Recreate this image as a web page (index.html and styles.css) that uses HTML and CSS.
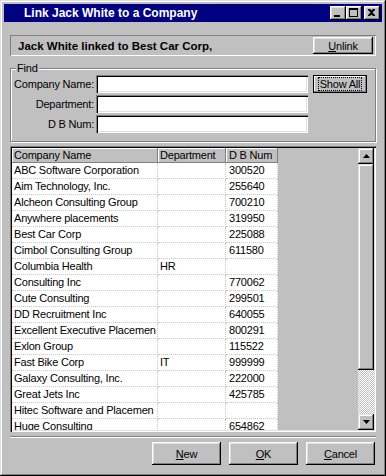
FILE: index.html
```html
<!DOCTYPE html>
<html lang="en">
<head>
    <meta charset="UTF-8">
    <title>Link Jack White to a Company</title>
    <link rel="stylesheet" href="styles.css">
</head>
<body>
    <div class="window">
        <div class="titlebar">
            <span class="title">Link Jack White to a Company</span>
            <div class="title-buttons">
                <button class="tbtn"><svg width="16" height="14" viewBox="0 0 16 14"><rect x="4" y="9" width="6" height="2" fill="#000"/></svg></button>
                <button class="tbtn"><svg width="16" height="14" viewBox="0 0 16 14"><path d="M3 2h9v9H3z M4 4v6h7V4z" fill="#000" fill-rule="evenodd"/></svg></button>
                <button class="tbtn tbtn-close"><svg width="16" height="14" viewBox="0 0 16 14"><path d="M4 3h2l1.5 1.5L9 3h2v1L8.5 6.5 11 9v1H9L7.5 8.5 6 10H4V9l2.5-2.5L4 4z" fill="#000"/></svg></button>
            </div>
        </div>

        <div class="content">
            <!-- текущая привязка -->
            <div class="status-panel">
                <span class="status-text">Jack White linked to Best Car Corp,</span>
                <button class="btn btn-unlink"><u>U</u>nlink</button>
            </div>

            <fieldset class="find">
                <legend>Find</legend>
                <div class="find-grid">
                    <label for="companyName">Company Name:</label>
                    <input type="text" id="companyName" class="field">
                    <button class="btn btn-default"><span class="focus">Show All</span></button>

                    <label for="department">Department:</label>
                    <input type="text" id="department" class="field">
                    <span></span>

                    <label for="dbNum">D B Num:</label>
                    <input type="text" id="dbNum" class="field">
                    <span></span>
                </div>
            </fieldset>

            <!-- список компаний -->
            <div class="list">
                <div class="list-body">
                    <table class="grid">
                        <thead>
                            <tr><th class="c-name">Company Name</th><th class="c-dept">Department</th><th class="c-num">D B Num</th></tr>
                        </thead>
                        <tbody>
                            <tr><td>ABC Software Corporation</td><td></td><td class="num">300520</td></tr>
                            <tr><td>Aim Technology, Inc.</td><td></td><td class="num">255640</td></tr>
                            <tr><td>Alcheon Consulting Group</td><td></td><td class="num">700210</td></tr>
                            <tr><td>Anywhere placements</td><td></td><td class="num">319950</td></tr>
                            <tr><td>Best Car Corp</td><td></td><td class="num">225088</td></tr>
                            <tr><td>Cimbol Consulting Group</td><td></td><td class="num">611580</td></tr>
                            <tr><td>Columbia Health</td><td>HR</td><td class="num"></td></tr>
                            <tr><td>Consulting Inc</td><td></td><td class="num">770062</td></tr>
                            <tr><td>Cute Consulting</td><td></td><td class="num">299501</td></tr>
                            <tr><td>DD Recruitment Inc</td><td></td><td class="num">640055</td></tr>
                            <tr><td>Excellent Executive Placemen</td><td></td><td class="num">800291</td></tr>
                            <tr><td>Exlon Group</td><td></td><td class="num">115522</td></tr>
                            <tr><td>Fast Bike Corp</td><td>IT</td><td class="num">999999</td></tr>
                            <tr><td>Galaxy Consulting, Inc.</td><td></td><td class="num">222000</td></tr>
                            <tr><td>Great Jets Inc</td><td></td><td class="num">425785</td></tr>
                            <tr><td>Hitec Software and Placemen</td><td></td><td class="num"></td></tr>
                            <tr><td>Huge Consulting</td><td></td><td class="num">654862</td></tr>
                        </tbody>
                    </table>
                </div>
                <div class="scrollbar">
                    <div class="sb-btn"><svg width="7" height="4" viewBox="0 0 7 4"><path d="M3.5 0L7 4H0z" fill="#000"/></svg></div>
                    <div class="sb-thumb"></div>
                    <div class="sb-track"></div>
                    <div class="sb-btn"><svg width="7" height="4" viewBox="0 0 7 4"><path d="M0 0h7L3.5 4z" fill="#000"/></svg></div>
                </div>
            </div>

            <div class="separator"></div>

            <div class="actions">
                <button class="btn btn-action"><u>N</u>ew</button>
                <button class="btn btn-action"><u>O</u>K</button>
                <button class="btn btn-action"><u>C</u>ancel</button>
            </div>
        </div>
    </div>
</body>
</html>
```

FILE: styles.css
```css
/* диалог в классическом стиле */
body {
    margin: 0;
    background: #c0c0c0;
}

.window {
    width: 386px;
    height: 476px;
    box-sizing: border-box;
    padding: 4px;
    background: #c0c0c0;
    box-shadow: inset -1px -1px #000, inset 1px 1px #dfdfdf, inset -2px -2px #808080, inset 2px 2px #fff;
    display: flex;
    flex-direction: column;
    font-family: "Liberation Sans", Arial, sans-serif;
    font-size: 11px;
    letter-spacing: -0.2px;
    color: #000;
}

.titlebar {
    height: 18px;
    background: #000080;
    color: #fff;
    display: flex;
    align-items: center;
    padding-left: 20px;
}

.title {
    flex: 1;
    font-weight: bold;
    font-size: 12px;
    letter-spacing: 0;
}

.title-buttons {
    display: flex;
    margin-right: 2px;
}

.tbtn {
    width: 16px;
    height: 14px;
    padding: 0;
    border: none;
    background: #c0c0c0;
    box-shadow: inset -1px -1px #000, inset 1px 1px #fff, inset -2px -2px #808080, inset 2px 2px #dfdfdf;
}

.tbtn svg {
    display: block;
}

.tbtn-close {
    margin-left: 2px;
}

.content {
    flex: 1;
    display: flex;
    flex-direction: column;
    padding: 13px 6px 0 6px;
}

.btn {
    background: #c0c0c0;
    border: none;
    padding: 0;
    color: #000;
    font-family: inherit;
    font-size: 11px;
    letter-spacing: inherit;
    box-shadow: inset -1px -1px #000, inset 1px 1px #fff, inset -2px -2px #808080, inset 2px 2px #dfdfdf;
}

.status-panel {
    height: 21px;
    box-sizing: border-box;
    display: flex;
    align-items: center;
    justify-content: space-between;
    padding: 0 3px 0 8px;
    box-shadow: inset 1px 1px #808080, inset -1px -1px #fff;
}

.status-text {
    font-weight: bold;
    font-size: 11.5px;
    letter-spacing: 0;
}

.btn-unlink {
    width: 60px;
    height: 17px;
}

/* блок поиска */
.find {
    margin: 6px 0 0 0;
    padding: 0 0 8px 0;
    min-inline-size: 0;
    border: 1px solid #808080;
    box-shadow: inset 1px 1px #fff, 1px 1px #fff;
}

.find legend {
    margin-left: 5px;
    padding: 0 1px;
    background: #c0c0c0;
    line-height: 13px;
}

.find-grid {
    display: grid;
    grid-template-columns: 83px 212px 54px;
    grid-auto-rows: 18px;
    column-gap: 2px;
    row-gap: 2px;
    align-items: center;
}

.find-grid label {
    text-align: right;
}

.field {
    width: 212px;
    height: 18px;
    box-sizing: border-box;
    margin: 0;
    padding: 0 3px;
    border: none;
    background: #fff;
    font-family: inherit;
    font-size: 11px;
    box-shadow: inset 1px 1px #808080, inset 2px 2px #000, inset -1px -1px #fff, inset -2px -2px #dfdfdf;
}

.btn-default {
    margin-left: 3px;
    width: 54px;
    height: 18px;
    box-sizing: border-box;
    border: 1px solid #000;
    box-shadow: inset -1px -1px #808080, inset 1px 1px #fff;
}

.btn-default .focus {
    outline: 1px dotted #000;
    outline-offset: 0;
    padding: 0 1px;
}

/* таблица */
.list {
    margin-top: 4px;
    height: 286px;
    box-sizing: border-box;
    padding: 2px;
    display: flex;
    box-shadow: inset 1px 1px #808080, inset 2px 2px #000, inset -1px -1px #fff, inset -2px -2px #dfdfdf;
}

.list-body {
    flex: 1;
    overflow: hidden;
    background: #c0c0c0;
}

.grid {
    table-layout: fixed;
    border-collapse: separate;
    border-spacing: 0;
    width: 266px;
}

.grid th,
.grid td {
    padding: 0 0 0 2px;
    white-space: nowrap;
    overflow: hidden;
    text-overflow: clip;
    text-align: left;
    font-weight: normal;
    box-sizing: border-box;
}

.grid th {
    line-height: 15px;
    background: #c0c0c0;
    box-shadow: inset -1px -1px #808080, inset 1px 1px #fff;
}

.grid td {
    line-height: 15px;
    background: #fff;
    border-right: 1px dotted #c8c8c8;
    border-bottom: 1px dotted #c8c8c8;
}

.c-name { width: 146px; }
.c-dept { width: 68px; }
.c-num { width: 52px; }

.grid th.c-num,
.grid td.num {
    padding-left: 3px;
}

.scrollbar {
    width: 16px;
    display: flex;
    flex-direction: column;
}

.sb-btn {
    height: 16px;
    display: flex;
    align-items: center;
    justify-content: center;
    background: #c0c0c0;
    box-shadow: inset -1px -1px #000, inset 1px 1px #dfdfdf, inset -2px -2px #808080, inset 2px 2px #fff;
}

.sb-btn svg {
    display: block;
}

.sb-thumb {
    height: 206px;
    background: #c0c0c0;
    box-shadow: inset -1px -1px #000, inset 1px 1px #dfdfdf, inset -2px -2px #808080, inset 2px 2px #fff;
}

.sb-track {
    flex: 1;
    background: repeating-conic-gradient(#c0c0c0 0 25%, #fff 0 50%) 0 0 / 2px 2px;
}

.separator {
    margin-top: 4px;
    border-top: 1px solid #808080;
    border-bottom: 1px solid #fff;
}

.actions {
    margin-top: 4px;
    display: flex;
    justify-content: flex-end;
    gap: 8px;
    padding-right: 1px;
}

.btn-action {
    width: 69px;
    height: 23px;
}
```
